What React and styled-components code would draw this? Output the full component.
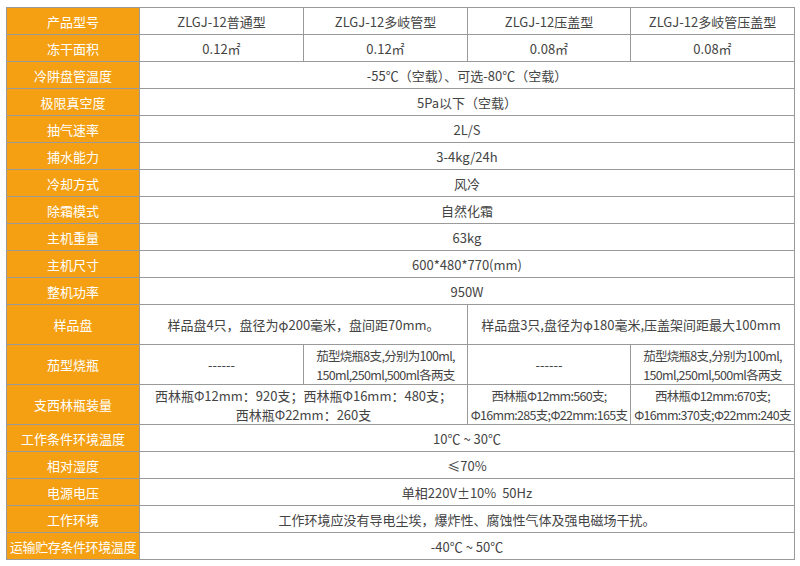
import React from "react";
import styled, { createGlobalStyle } from "styled-components";

const Global = createGlobalStyle`
  html, body { margin: 0; padding: 0; background: #fff; }
  body { font-family: "Noto Sans CJK SC", "Noto Sans", sans-serif; }
`;

const Page = styled.div`
  padding: 7px 6px;
`;

const Table = styled.table`
  border-collapse: collapse;
  table-layout: fixed;
  width: 788px;
  font-size: 13px;
  color: #444;
`;

const Row = styled.tr`
  height: ${(p) => (p.$tall ? 40 : 27)}px;
`;

const Head = styled.th`
  background: #f4a012;
  color: #fff;
  font-weight: 400;
  border: 1px solid #9a9a9a;
  padding: 0;
  text-align: center;
  white-space: nowrap;
  letter-spacing: ${(p) => (p.$tight ? "-0.4px" : "0")};
`;

const Cell = styled.td`
  border: 1px solid #9a9a9a;
  padding: 0;
  text-align: center;
  line-height: 19px;
  white-space: nowrap;
  overflow: hidden;
  font-size: ${(p) => (p.$tight ? "12.5px" : "13px")};
  letter-spacing: ${(p) => (p.$tight ? "-0.7px" : "0")};
`;

const rows = [
  ["产品型号", ["ZLGJ-12普通型", "ZLGJ-12多岐管型", "ZLGJ-12压盖型", "ZLGJ-12多岐管压盖型"]],
  ["冻干面积", ["0.12㎡", "0.12㎡", "0.08㎡", "0.08㎡"]],
  ["冷阱盘管温度", "-55℃（空载）、可选-80℃（空载）"],
  ["极限真空度", "5Pa以下（空载）"],
  ["抽气速率", "2L/S"],
  ["捕水能力", "3-4kg/24h"],
  ["冷却方式", "风冷"],
  ["除霜模式", "自然化霜"],
  ["主机重量", "63kg"],
  ["主机尺寸", "600*480*770(mm)"],
  ["整机功率", "950W"],
];

const rows2 = [
  ["工作条件环境温度", "10℃ ~ 30℃"],
  ["相对湿度", "≤70%"],
  ["电源电压", "单相220V±10%  50Hz"],
  ["工作环境", "工作环境应没有导电尘埃，爆炸性、腐蚀性气体及强电磁场干扰。"],
  ["运输贮存条件环境温度", "-40℃ ~ 50℃"],
];

function SpecRow({ label, value }) {
  return (
    <Row>
      <Head $tight={label.length > 9}>{label}</Head>
      {Array.isArray(value) ? (
        value.map((v, i) => <Cell key={i}>{v}</Cell>)
      ) : (
        <Cell colSpan={4} style={{ whiteSpace: "pre" }}>{value}</Cell>
      )}
    </Row>
  );
}

export default function App() {
  return (
    <>
      <Global />
      <Page>
        <Table>
          <colgroup>
            <col style={{ width: 133 }} />
            <col style={{ width: 164 }} />
            <col style={{ width: 164 }} />
            <col style={{ width: 163 }} />
            <col style={{ width: 164 }} />
          </colgroup>
          <tbody>
            {rows.map(([l, v]) => (
              <SpecRow key={l} label={l} value={v} />
            ))}
            <Row $tall>
              <Head>样品盘</Head>
              <Cell colSpan={2}>样品盘4只，盘径为φ200毫米，盘间距70mm。</Cell>
              <Cell colSpan={2}>样品盘3只,盘径为φ180毫米,压盖架间距最大100mm</Cell>
            </Row>
            <Row $tall>
              <Head>茄型烧瓶</Head>
              <Cell>------</Cell>
              <Cell $tight>
                茄型烧瓶8支,分别为100ml,
                <br />
                150ml,250ml,500ml各两支
              </Cell>
              <Cell>------</Cell>
              <Cell $tight>
                茄型烧瓶8支,分别为100ml,
                <br />
                150ml,250ml,500ml各两支
              </Cell>
            </Row>
            <Row $tall>
              <Head>支西林瓶装量</Head>
              <Cell colSpan={2}>
                西林瓶Φ12mm：920支；西林瓶Φ16mm：480支；
                <br />
                西林瓶Φ22mm：260支
              </Cell>
              <Cell $tight>
                西林瓶Φ12mm:560支;
                <br />
                Φ16mm:285支;Φ22mm:165支
              </Cell>
              <Cell $tight>
                西林瓶Φ12mm:670支;
                <br />
                Φ16mm:370支;Φ22mm:240支
              </Cell>
            </Row>
            {rows2.map(([l, v]) => (
              <SpecRow key={l} label={l} value={v} />
            ))}
          </tbody>
        </Table>
      </Page>
    </>
  );
}
